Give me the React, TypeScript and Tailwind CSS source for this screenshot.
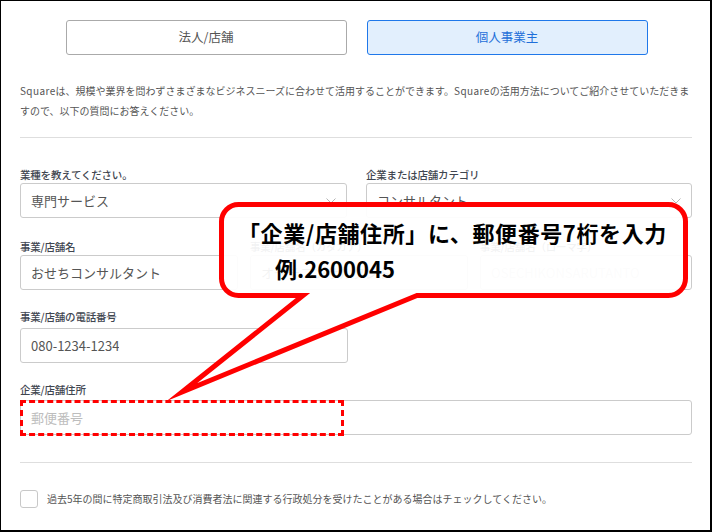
import type { ReactNode } from "react";

const FONT = "font-['Noto_Sans_CJK_JP','Noto_Sans',sans-serif]";

function Label({ children, className = "" }: { children: ReactNode; className?: string }) {
  return (
    <div className={`text-[10.5px] leading-[14px] font-medium tracking-[-0.2px] text-[#3f4650] ${className}`}>
      {children}
    </div>
  );
}

function Field({
  value,
  placeholder,
  select,
  className = "",
}: {
  value?: string;
  placeholder?: string;
  select?: boolean;
  className?: string;
}) {
  return (
    <div
      className={`flex h-[35px] items-center justify-between rounded-[3px] border border-[#cbcbcb] bg-white pl-[10px] pr-[10px] ${className}`}
    >
      {value ? (
        <span className="truncate text-[13px] text-[#555]">{value}</span>
      ) : (
        <span className="text-[13px] text-[#bdbdbd]">{placeholder}</span>
      )}
      {select ? (
        <svg width="10" height="6" viewBox="0 0 10 6" className="shrink-0">
          <polyline points="0.5,0.5 5,5 9.5,0.5" fill="none" stroke="#b5b5b5" strokeWidth="1" />
        </svg>
      ) : null}
    </div>
  );
}

function Callout() {
  return (
    <>
      <svg
        className="pointer-events-none absolute left-0 top-0"
        width="709"
        height="529"
        viewBox="1 1 709 529"
      >
        <path
          d="M 238.5 204.5 H 668.5 A 17 17 0 0 1 685.5 221.5 V 278.5 A 17 17 0 0 1 668.5 295.5 H 417 L 182 392 L 303 295.5 H 238.5 A 17 17 0 0 1 221.5 278.5 V 221.5 A 17 17 0 0 1 238.5 204.5 Z"
          fill="#ffffff"
          fillOpacity="0.93"
          stroke="#ff0000"
          strokeWidth="5"
          strokeLinejoin="miter"
          strokeMiterlimit="12"
        />
      </svg>
      <div className="pointer-events-none absolute left-[237px] top-[213px] text-[22px] leading-[36px] font-bold tracking-[0.6px] text-black">
        <div>「企業/店舗住所」に、郵便番号7桁を入力</div>
        <div className="pl-[37px] tracking-[0px]">例.2600045</div>
      </div>
    </>
  );
}

export default function App() {
  return (
    <div
      className={`relative h-[532px] w-[712px] overflow-hidden border-t border-l border-r-2 border-b-2 border-black bg-white ${FONT}`}
    >
      <div className="pl-[19px] pr-[18px] pt-[19px]">
        <div className="flex justify-center gap-[20px] pl-[1px]">
          <button className="flex h-[35px] w-[281px] items-center justify-center rounded-[3px] border border-[#aaaaaa] bg-white text-[12.5px] text-[#555]">
            法人/店舗
          </button>
          <button className="flex h-[35px] w-[281px] items-center justify-center rounded-[3px] border border-[#1f78ea] bg-[#e2effd] text-[12.5px] text-[#1f6fd9]">
            個人事業主
          </button>
        </div>

        <div className="mt-[26px] text-[10px] leading-[20px] whitespace-nowrap text-[#555]">
          <p>
            <span className="tracking-[0.4px]">Square</span>
            は、規模や業界を問わずさまざまなビジネスニーズに合わせて活用することができます。
            <span className="tracking-[0.4px]">Square</span>
            の活用方法についてご紹介させていただきま
          </p>
          <p>すので、以下の質問にお答えください。</p>
        </div>

        <div className="mt-[16px] border-t border-[#dedede]" />

        <div className="mt-[30px] grid grid-cols-[327px_1fr] gap-x-[19px]">
          <div>
            <Label>業種を教えてください。</Label>
            <Field className="mt-[1px]" value="専門サービス" select />
          </div>
          <div>
            <Label>企業または店舗カテゴリ</Label>
            <Field className="mt-[1px]" value="コンサルタント" select />
          </div>
        </div>

        <div className="mt-[22px] grid grid-cols-[218px_218px_1fr] gap-x-[12px]">
          <div>
            <Label>事業/店舗名</Label>
            <Field className="mt-[1px]" value="おせちコンサルタント" />
          </div>
          <div>
            <Label>事業/店舗名（カタカナ）</Label>
            <Field className="mt-[1px]" value="オセチコンサルタント" />
          </div>
          <div>
            <Label>事業/店舗名（ローマ字）</Label>
            <Field className="mt-[1px] [&>span]:text-[#cfcfcf]" value="OSECHIKONSARUTANTO" />
          </div>
        </div>

        <div className="mt-[20px] w-[328px]">
          <Label>事業/店舗の電話番号</Label>
          <Field className="mt-[4px]" value="080-1234-1234" />
        </div>

        <div className="mt-[20px]">
          <Label>企業/店舗住所</Label>
          <div className="relative mt-[3px]">
            <Field placeholder="郵便番号" />
            <div className="pointer-events-none absolute left-0 top-0 h-[36px] w-[324px] border-[3px] border-dashed border-[#ff0000]" />
          </div>
        </div>

        <div className="mt-[27px] border-t border-[#dedede]" />

        <label className="mt-[27px] flex items-center gap-[9px]">
          <span className="h-[18px] w-[18px] shrink-0 rounded-[3px] border border-[#c8c8c8] bg-white" />
          <span className="text-[10px] leading-[14px] text-[#555]">
            過去5年の間に特定商取引法及び消費者法に関連する行政処分を受けたことがある場合はチェックしてください。
          </span>
        </label>
      </div>

      <Callout />
    </div>
  );
}
